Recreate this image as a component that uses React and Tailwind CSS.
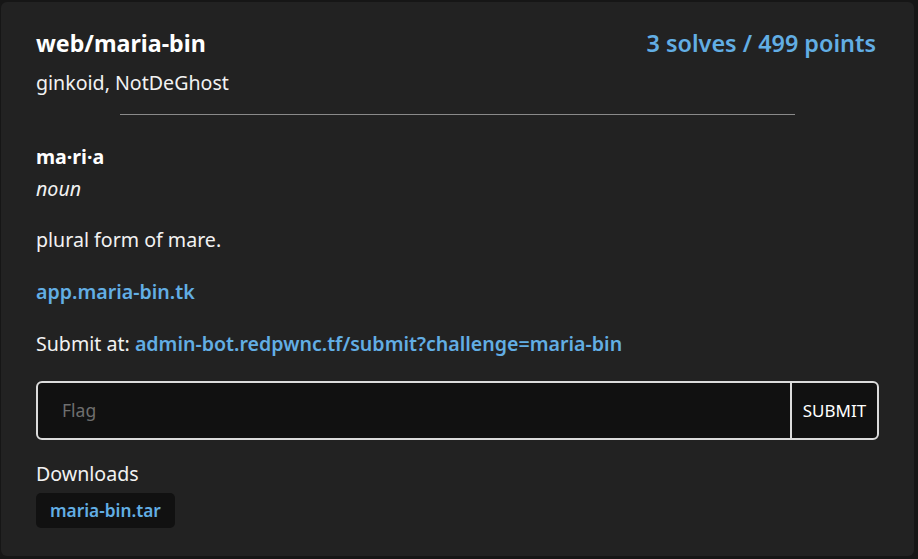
import React from "react";

export default function App() {
  return (
    <div className="w-[918px] h-[559px] bg-[#161616] pt-[2px] pl-[1px] pr-[4px] pb-[3px]" style={{ fontFamily: '"Noto Sans", "Open Sans", sans-serif' }}>
      <div className="h-full rounded-md bg-[#222222] px-[35px] pt-[28px] text-[#f2f2f2]">
        <div className="flex items-start justify-between">
          <div>
            <div className="text-[23.2px] font-bold leading-[26px] text-white">web/maria-bin</div>
            <div className="mt-[15px] text-[19.6px] leading-[24px]">ginkoid, NotDeGhost</div>
          </div>
          <div className="text-[23.4px] font-semibold leading-[26px] text-[#62aee4] mr-[3px]">3 solves / 499 points</div>
        </div>
        <div className="mx-auto mt-[19px] h-px w-4/5 bg-[#8a8a8a]" />
        <div className="mt-[30px] text-[19.6px] font-bold leading-[24px] text-white">ma·ri·a</div>
        <div className="mt-[8px] text-[19.6px] italic leading-[24px]">noun</div>
        <div className="mt-[27px] text-[19.6px] leading-[24px]">plural form of mare.</div>
        <div className="mt-[28px] text-[19.6px] font-semibold leading-[24px] text-[#62aee4]">app.maria-bin.tk</div>
        <div className="mt-[28px] text-[19.6px] leading-[24px]">
          Submit at: <span className="font-semibold text-[#62aee4]">admin-bot.redpwnc.tf/submit?challenge=maria-bin</span>
        </div>
        <div className="mt-[25px] flex h-[59px] overflow-hidden rounded-[6px] border-2 border-[#dcdcdc] bg-[#111111]">
          <div className="flex flex-1 items-center pl-[24px] text-[17.5px] text-[#6e6e6e]">Flag</div>
          <div className="flex w-[87px] items-center justify-center border-l-2 border-[#dcdcdc] text-[17px] text-white">SUBMIT</div>
        </div>
        <div className="mt-[22px] text-[19.6px] leading-[24px]">Downloads</div>
        <div className="mt-[7px] inline-flex h-[35px] items-center rounded-[5px] bg-[#111111] px-[14px] text-[17.3px] font-semibold text-[#62aee4]">maria-bin.tar</div>
      </div>
    </div>
  );
}
